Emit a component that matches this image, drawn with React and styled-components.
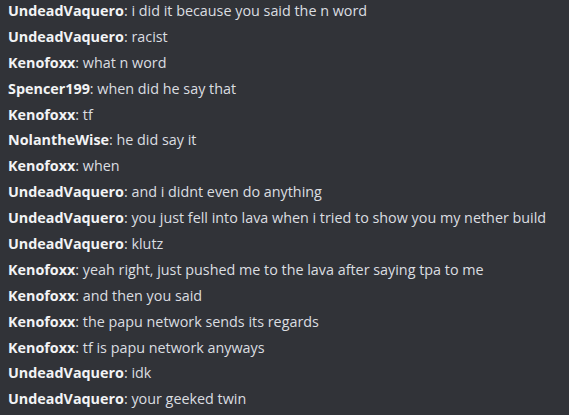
import React from 'react'
import styled, { createGlobalStyle } from 'styled-components';

const GlobalStyle = createGlobalStyle`
  html, body {
    margin: 0;
    padding: 0;
    background: #313338;
  }
`;

const Chat = styled.div`
  width: 569px;
  height: 415px;
  overflow: hidden;
  background-color: #313338;
  padding: 0 8px;
  box-sizing: border-box;
  font-family: "Open Sans", "Noto Sans", sans-serif;
  font-size: 14.35px;
`;

const Line = styled.div`
  height: 25.9px;
  line-height: 22px;
  white-space: nowrap;
  color: #dbdee1;
`;

const Name = styled.span`
  font-weight: 700;
  color: #f2f3f5;
`;

const messages = [
  ['UndeadVaquero', 'i did it because you said the n word'],
  ['UndeadVaquero', 'racist'],
  ['Kenofoxx', 'what n word'],
  ['Spencer199', 'when did he say that'],
  ['Kenofoxx', 'tf'],
  ['NolantheWise', 'he did say it'],
  ['Kenofoxx', 'when'],
  ['UndeadVaquero', 'and i didnt even do anything'],
  ['UndeadVaquero', 'you just fell into lava when i tried to show you my nether build'],
  ['UndeadVaquero', 'klutz'],
  ['Kenofoxx', 'yeah right, just pushed me to the lava after saying tpa to me'],
  ['Kenofoxx', 'and then you said'],
  ['Kenofoxx', 'the papu network sends its regards'],
  ['Kenofoxx', 'tf is papu network anyways'],
  ['UndeadVaquero', 'idk'],
  ['UndeadVaquero', 'your geeked twin'],
];

const App = () => {
  return (
    <>
      <GlobalStyle />
      <Chat>
        {messages.map(([who, text], i) => (
          <Line key={i}>
            <Name>{who}</Name>: {text}
          </Line>
        ))}
      </Chat>
    </>
  )
}

export default App
